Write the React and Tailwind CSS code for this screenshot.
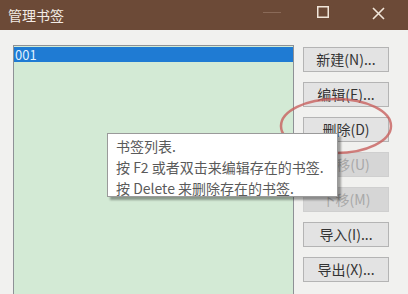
import React from "react";

const font = { fontFamily: '"Noto Sans CJK SC", "Noto Sans", sans-serif' };

function Btn({ label, disabled }) {
  return (
    <div
      className={
        "h-[25px] w-[86px] flex items-center justify-center text-[14px] border " +
        (disabled
          ? "bg-[#d6d6d6] border-[#cfcfcf] text-[#a8a8a8]"
          : "bg-[#e3e3e3] border-[#b4b4b4] text-[#333333]")
      }
    >
      {label}
    </div>
  );
}

export default function App() {
  return (
    <div className="w-[408px] h-[294px] overflow-hidden flex flex-col" style={font}>
      <div className="h-[30px] shrink-0 bg-[#6c4a37] flex items-center pl-[8px] relative">
        <span className="text-[14px] text-[#f3ece6] leading-none">管理书签</span>
        <div className="absolute left-[263px] top-[12px] w-[18px] h-[1px] bg-[#8a6a58]" />
        <svg className="absolute left-[317px] top-[6px]" width="12" height="12" viewBox="0 0 12 12">
          <rect x="0.75" y="0.75" width="10.5" height="10.5" fill="none" stroke="#f1e6da" strokeWidth="1.5" />
        </svg>
        <svg className="absolute left-[372px] top-[7px]" width="13" height="13" viewBox="0 0 13 13">
          <path d="M1 1 L12 12 M12 1 L1 12" stroke="#f1e6da" strokeWidth="1.6" />
        </svg>
      </div>
      <div className="flex-1 bg-[#f1f1ef] relative flex pl-[13px] pt-[15px]">
        <div className="w-[281px] h-[260px] shrink-0 border border-[#8e9196] bg-[#d3ead5] pt-[1px]">
          <div className="h-[15px] bg-[#1f7bd3] text-[#dff0ff] text-[13px] leading-[15px] pl-[1px]">001</div>
        </div>
        <div className="ml-[9px] mt-[2px] flex flex-col gap-[10px]">
          <Btn label="新建(N)..." />
          <Btn label="编辑(E)..." />
          <Btn label="删除(D)" />
          <Btn label="上移(U)" disabled />
          <Btn label="下移(M)" disabled />
          <Btn label="导入(I)..." />
          <Btn label="导出(X)..." />
        </div>

        <svg className="absolute left-[278px] top-[66px]" width="118" height="60" viewBox="0 0 118 60">
          <ellipse cx="58" cy="30" rx="55" ry="27" fill="none" stroke="#c8605e" strokeOpacity="0.8" strokeWidth="2.5" />
        </svg>

        <div className="absolute left-[107px] top-[103px] w-[231px] h-[64px] bg-white border border-[#9a9a9a] shadow-[3px_3px_2px_rgba(0,0,0,0.35)] pl-[8px] pt-[2px] text-[14px] leading-[21px] text-[#5a5a5a] whitespace-nowrap">
          <div>书签列表.</div>
          <div>按 F2 或者双击来编辑存在的书签.</div>
          <div>按 Delete 来删除存在的书签.</div>
        </div>
      </div>
    </div>
  );
}
